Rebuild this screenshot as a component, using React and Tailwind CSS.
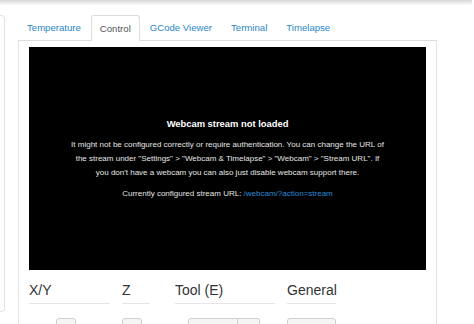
import React from 'react';

const TABS = ['Temperature', 'Control', 'GCode Viewer', 'Terminal', 'Timelapse'];

function Legend({ label, width, gap, children }) {
  return (
    <div className={`${width} ${gap} shrink-0`}>
      <div className="text-[14px] leading-[20px] text-[#333] pb-[3px] border-b border-[#e5e5e5]">
        {label}
      </div>
      <div className="mt-[14px] flex">{children}</div>
    </div>
  );
}

export default function App() {
  return (
    <div className="relative w-[474px] h-[324px] overflow-hidden bg-white font-['Liberation_Sans',Arial,sans-serif]">
      {/* navbar shadow */}
      <div className="h-[5px] w-[472px] rounded-br-[3px] bg-gradient-to-b from-[#d6d6d6] to-[#fbfbfb]" />

      <div className="flex mt-[10px]">
        {/* sidebar edge */}
        <div className="w-[5px] h-[297px] shrink-0 border-r border-y border-[#e3e3e3] rounded-r-[4px]" />

        <div className="ml-[13px] w-[419px] shrink-0">
          {/* tabs */}
          <ul className="flex h-[26px] border-b border-[#ddd]">
            {TABS.map((tab) =>
              tab === 'Control' ? (
                <li
                  key={tab}
                  className="mr-[1px] px-[8px] pt-[2px] -mb-px h-[26px] flex items-center border border-[#ddd] border-b-white bg-white rounded-t-[3px] text-[9.6px] text-[#555]"
                >
                  {tab}
                </li>
              ) : (
                <li
                  key={tab}
                  className="mr-[1px] px-[8px] pt-[2px] h-[25px] flex items-center border border-transparent text-[9.6px] text-[#2a86c8]"
                >
                  {tab}
                </li>
              )
            )}
          </ul>

          {/* tab content */}
          <div className="border-x border-[#e2e2e2] px-[10px] pt-[6px] h-[290px]">
            <div className="h-[223px] bg-black flex flex-col items-center justify-center text-center">
              <div className="text-[9.4px] leading-[14px] font-bold text-white mb-[7px]">
                Webcam stream not loaded
              </div>
              <p className="w-[316px] text-[8px] leading-[14px] text-[#e6e6e6] mb-[7px]">
                It might not be configured correctly or require authentication. You can change the URL of the stream under "Settings" &gt; "Webcam &amp; Timelapse" &gt; "Webcam" &gt; "Stream URL". If you don't have a webcam you can also just disable webcam support there.
              </p>
              <p className="text-[8px] leading-[14px] text-[#e6e6e6]">
                Currently configured stream URL: <span className="text-[#2a8ad4]">/webcam/?action=stream</span>
              </p>
            </div>

            <div className="flex mt-[10px]">
              <Legend label="X/Y" width="w-[81px]" gap="mr-[12px]">
                <div className="ml-[27px] w-[20px] h-[20px] bg-[#f5f5f5] border border-[#d0d0d0] rounded-[3px]" />
              </Legend>
              <Legend label="Z" width="w-[28px]" gap="mr-[25px]">
                <div className="w-[20px] h-[20px] bg-[#f5f5f5] border border-[#d0d0d0] rounded-[3px]" />
              </Legend>
              <Legend label="Tool (E)" width="w-[100px]" gap="mr-[12px]">
                <div className="ml-[13px] flex">
                  <div className="w-[50px] h-[20px] bg-[#f5f5f5] border border-[#d0d0d0] rounded-l-[3px]" />
                  <div className="w-[22px] h-[20px] bg-[#f5f5f5] border border-l-0 border-[#d0d0d0] rounded-r-[3px]" />
                </div>
              </Legend>
              <Legend label="General" width="w-[49px]" gap="">
                <div className="w-[50px] h-[20px] bg-[#f5f5f5] border border-[#d0d0d0] rounded-[3px]" />
              </Legend>
            </div>
          </div>
        </div>
      </div>
    </div>
  );
}
